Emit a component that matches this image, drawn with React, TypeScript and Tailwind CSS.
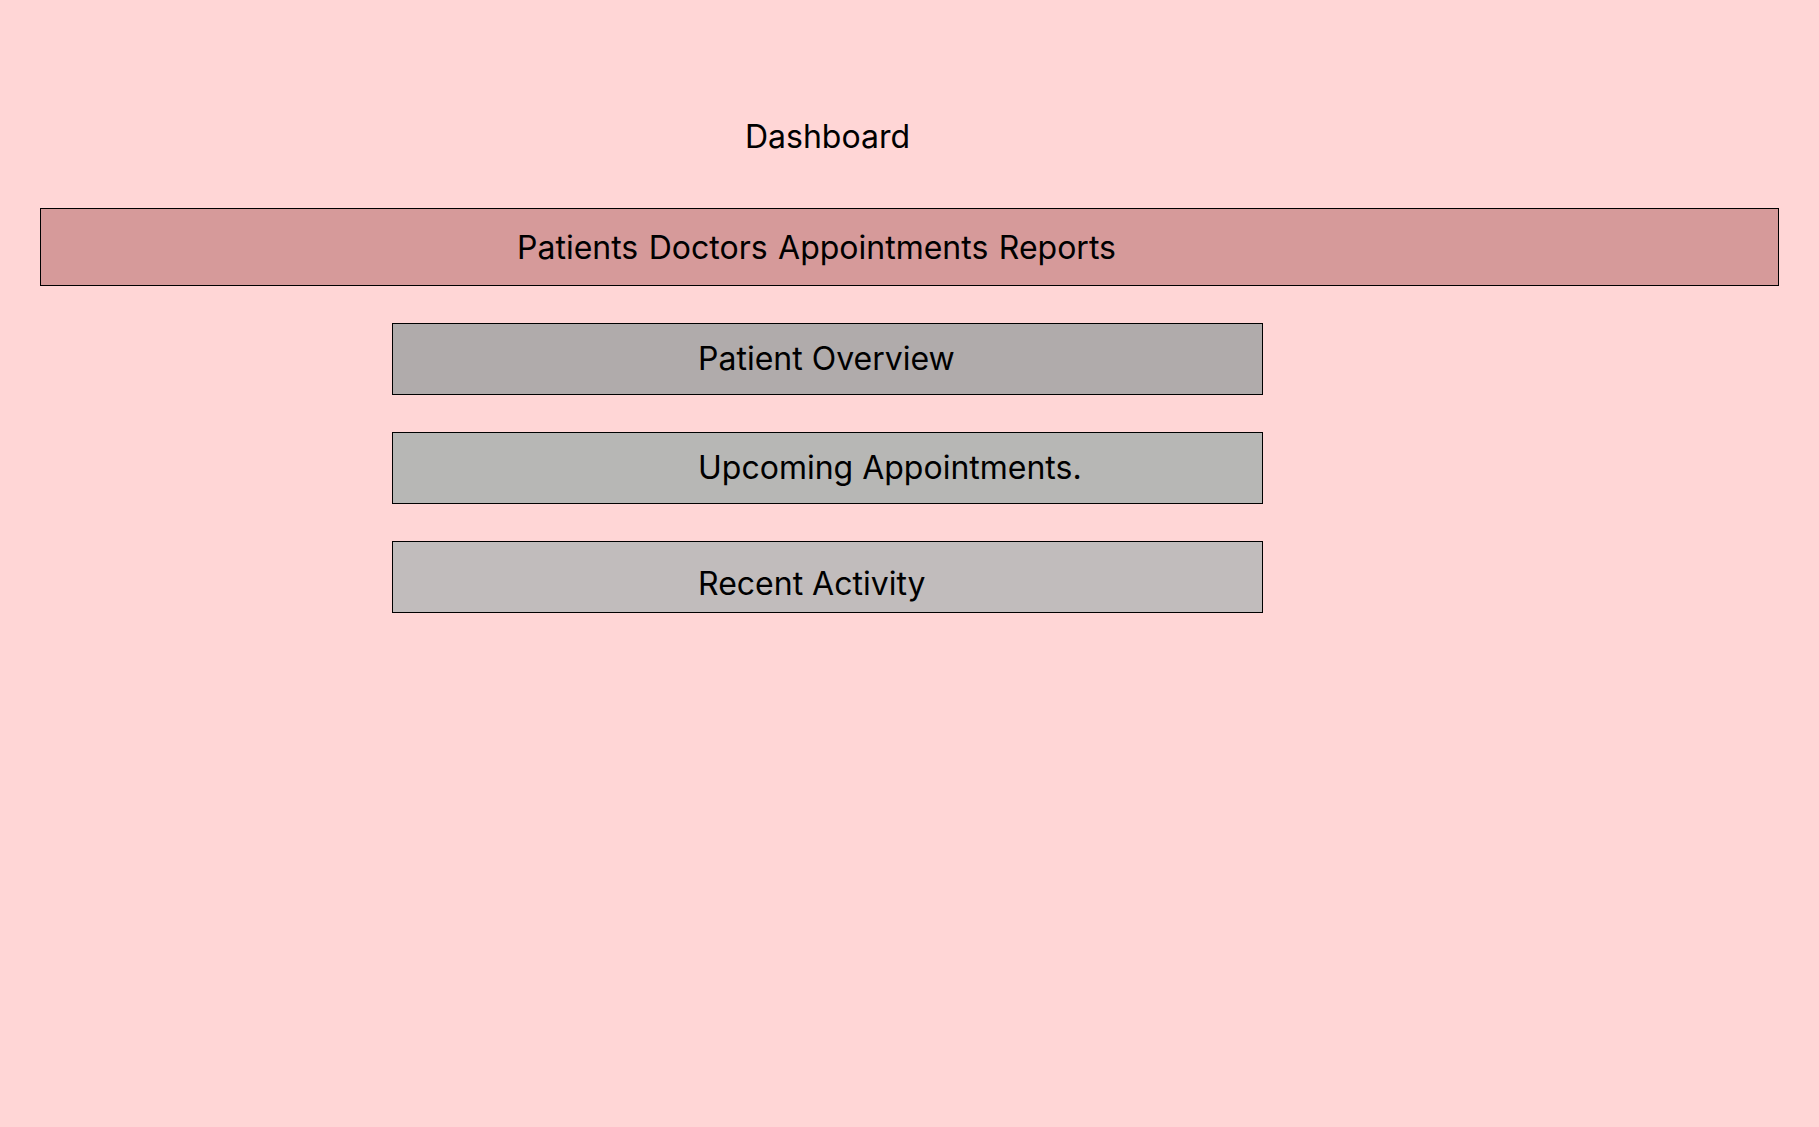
export default function App() {
  return (
    <div
      className="min-h-screen w-full bg-[#ffd6d6] text-black"
      style={{ fontFamily: 'Inter, "Noto Sans", sans-serif' }}
    >
      <div className="px-[40px] pt-[112.5px]">
        <h1 className="ml-[352px] w-[871px] text-center text-[32px] font-normal leading-normal">
          Dashboard
        </h1>
        <nav className="mt-[47px] flex h-[78px] items-center border border-black bg-[#d69a9a] pl-[476px] pt-[3px] text-[32px] leading-normal">
          <span>Patients</span>
          <span className="ml-[10.5px]">Doctors</span>
          <span className="ml-[10.5px]">Appointments</span>
          <span className="ml-[10.5px]">Reports</span>
        </nav>
        <div className="ml-[352px] mt-[37px] flex w-[871px] flex-col gap-[37px]">
          <div className="flex h-[72px] items-center border border-black bg-[#b0abab] pl-[305px] text-[32px] leading-normal">
            Patient Overview
          </div>
          <div className="flex h-[72px] items-center border border-black bg-[#b7b7b5] pl-[305px] text-[32px] leading-normal">
            Upcoming Appointments.
          </div>
          <div className="flex h-[72px] items-center border border-black bg-[#c1bcbc] pl-[305px] pt-[14px] text-[32px] leading-normal">
            Recent Activity
          </div>
        </div>
      </div>
    </div>
  );
}
